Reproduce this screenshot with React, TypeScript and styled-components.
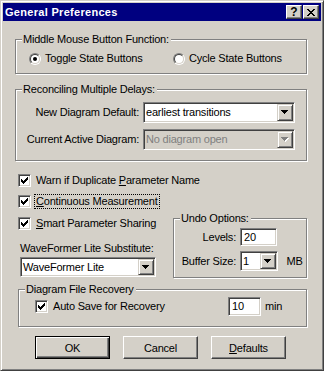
import styled, { createGlobalStyle } from "styled-components";

const face = "#d4d0c8";
const shadow = "#808080";
const darkShadow = "#404040";

const GlobalStyle = createGlobalStyle`
  html, body {
    margin: 0;
    padding: 0;
    background: ${face};
  }
  * {
    box-sizing: border-box;
  }
`;

const Window = styled.div`
  width: 324px;
  height: 371px;
  display: flex;
  flex-direction: column;
  padding: 2px;
  background: ${face};
  border: 1px solid;
  border-color: ${face} ${darkShadow} ${darkShadow} ${face};
  box-shadow: inset 1px 1px #fff, inset -1px -1px ${shadow};
  font-family: "Liberation Sans", Arial, sans-serif;
  font-size: 11px;
  letter-spacing: -0.2px;
  color: #000;
  white-space: nowrap;
`;

const TitleBar = styled.div`
  height: 18px;
  flex: none;
  display: flex;
  align-items: center;
  padding: 0 2px;
  background: #000080;
  color: #fff;
  font-weight: 700;
  letter-spacing: 0.3px;
`;

const CaptionButtons = styled.div`
  margin-left: auto;
  display: flex;
  gap: 1px;
`;

const CaptionButton = styled.span`
  width: 16px;
  height: 14px;
  display: flex;
  align-items: center;
  justify-content: center;
  background: ${face};
  color: #000;
  border: 1px solid;
  border-color: #fff ${darkShadow} ${darkShadow} #fff;
  box-shadow: inset -1px -1px ${shadow};
  font-size: 12px;
  line-height: 1;
  letter-spacing: 0;
`;

const Client = styled.div`
  flex: 1;
  display: flex;
  flex-direction: column;
  padding: 18px 14px 0 12px;
`;

const Group = styled.div<{ $mt?: number; $ml?: number; $pb: number }>`
  display: flex;
  flex-direction: column;
  margin-top: ${(p) => p.$mt ?? 0}px;
  margin-left: ${(p) => p.$ml ?? 0}px;
  padding-bottom: ${(p) => p.$pb}px;
  border: 1px solid ${shadow};
  box-shadow: inset 1px 1px #fff, 1px 1px #fff;
`;

const GroupTitle = styled.span`
  align-self: flex-start;
  margin: -7px 0 0 6px;
  padding: 0 2px 0 1px;
  line-height: 13px;
  background: ${face};
`;

const RadioRow = styled.div`
  display: grid;
  grid-template-columns: 144px auto;
  margin-top: 6px;
  padding-left: 13px;
`;

const Option = styled.label`
  display: flex;
  align-items: center;
  height: 13px;
`;

const RadioRing = styled.span`
  width: 12px;
  height: 12px;
  flex: none;
  display: flex;
  border-radius: 50%;
  border: 1px solid;
  border-color: ${shadow} #fff #fff ${shadow};
`;

const RadioWell = styled.span`
  width: 10px;
  height: 10px;
  display: flex;
  align-items: center;
  justify-content: center;
  border-radius: 50%;
  border: 1px solid;
  border-color: ${darkShadow} ${face} ${face} ${darkShadow};
  background: #fff;
`;

const RadioDot = styled.span<{ $on: boolean }>`
  width: 4px;
  height: 4px;
  border-radius: 50%;
  background: ${(p) => (p.$on ? "#000" : "transparent")};
`;

const RadioText = styled.span`
  margin-left: 4px;
  line-height: 13px;
`;

const FieldGrid = styled.div<{ $cols: string; $mt: number; $pl: number; $rowGap: number }>`
  display: grid;
  grid-template-columns: ${(p) => p.$cols};
  column-gap: 4px;
  row-gap: ${(p) => p.$rowGap}px;
  align-items: center;
  justify-items: start;
  margin-top: ${(p) => p.$mt}px;
  padding-left: ${(p) => p.$pl}px;
`;

const FieldLabel = styled.span`
  justify-self: end;
  line-height: 13px;
`;

const Sunken = styled.div<{ $w: number; $h: number; $disabled?: boolean }>`
  width: ${(p) => p.$w}px;
  height: ${(p) => p.$h}px;
  display: flex;
  align-items: center;
  padding: 1px;
  border: 1px solid;
  border-color: ${shadow} #fff #fff ${shadow};
  box-shadow: inset 1px 1px ${darkShadow}, inset -1px -1px ${face};
  background: ${(p) => (p.$disabled ? face : "#fff")};
  color: ${(p) => (p.$disabled ? shadow : "#000")};
`;

const FieldText = styled.span<{ $pl: number }>`
  flex: 1;
  padding-left: ${(p) => p.$pl}px;
  line-height: 13px;
  overflow: hidden;
`;

const DropButton = styled.span`
  width: 16px;
  align-self: stretch;
  flex: none;
  display: flex;
  align-items: center;
  justify-content: center;
  background: ${face};
  border: 1px solid;
  border-color: ${face} ${darkShadow} ${darkShadow} ${face};
  box-shadow: inset 1px 1px #fff, inset -1px -1px ${shadow};
`;

const Lower = styled.div`
  display: flex;
  flex-direction: column;
  padding-left: 3px;
`;

const Checks = styled.div`
  display: flex;
  flex-direction: column;
  gap: 6px;
  margin-top: 12px;
`;

const CheckRow = styled.label`
  display: flex;
  align-items: center;
  height: 15px;
`;

const CheckBox = styled.span`
  width: 13px;
  height: 13px;
  flex: none;
  padding: 2px;
  border: 1px solid;
  border-color: ${shadow} #fff #fff ${shadow};
  box-shadow: inset 1px 1px ${darkShadow}, inset -1px -1px ${face};
  background: #fff;
  svg {
    display: block;
  }
`;

const CheckText = styled.span<{ $focus?: boolean }>`
  margin-left: 3px;
  padding: 0 1px;
  line-height: 13px;
  border: 1px ${(p) => (p.$focus ? "dotted #000" : "solid transparent")};
`;

const Split = styled.div`
  display: grid;
  grid-template-columns: 155px 134px;
  align-items: start;
  margin-top: 7px;
`;

const LeftColumn = styled.div`
  display: flex;
  flex-direction: column;
`;

const SubLabel = styled.span`
  margin: 11px 0 0 2px;
  line-height: 13px;
`;

const ComboSlot = styled.div`
  margin: 2px 0 0 2px;
`;

const Unit = styled.span<{ $ml: number }>`
  margin-left: ${(p) => p.$ml}px;
  line-height: 13px;
`;

const RecoveryRow = styled.div`
  display: grid;
  grid-template-columns: 193px 33px auto;
  align-items: center;
  margin-top: 1px;
  padding-left: 16px;
`;

const ButtonRow = styled.div`
  display: flex;
  gap: 13px;
  margin-top: 9px;
  padding-left: 20px;
`;

const PushButton = styled.button<{ $default?: boolean }>`
  width: 75px;
  height: 23px;
  padding: 0;
  font: inherit;
  letter-spacing: inherit;
  color: #000;
  background: ${face};
  border: 1px solid;
  border-color: ${(p) =>
    p.$default ? "#000" : `#fff ${darkShadow} ${darkShadow} #fff`};
  box-shadow: ${(p) =>
    p.$default
      ? `inset 1px 1px #fff, inset -1px -1px ${darkShadow}, inset -2px -2px ${shadow}`
      : `inset -1px -1px ${shadow}`};
`;

const CheckMark = () => (
  <svg width="7" height="7" viewBox="0 0 7 7">
    <path
      d="M0 2h1v3H0z M1 3h1v3H1z M2 4h1v3H2z M3 3h1v3H3z M4 2h1v3H4z M5 1h1v3H5z M6 0h1v3H6z"
      fill="#000"
    />
  </svg>
);

const ARROW = "M0 0h7v1h-1v1h-1v1h-1v1h-1v-1h-1v-1h-1v-1h-1z";

const DownArrow = ({ disabled }: { disabled?: boolean }) => (
  <svg width="8" height="5" viewBox="0 0 8 5">
    {disabled && <path d={ARROW} fill="#fff" transform="translate(1 1)" />}
    <path d={ARROW} fill={disabled ? shadow : "#000"} />
  </svg>
);

const CloseGlyph = () => (
  <svg width="8" height="7" viewBox="0 0 8 7">
    <path
      d="M0 0h2v1H0z M6 0h2v1H6z M1 1h2v1H1z M5 1h2v1H5z M2 2h4v1H2z M3 3h2v1H3z M2 4h4v1H2z M1 5h2v1H1z M5 5h2v1H5z M0 6h2v1H0z M6 6h2v1H6z"
      fill="#000"
    />
  </svg>
);

type ComboProps = { value: string; w: number; h: number; disabled?: boolean };

const Combo = ({ value, w, h, disabled }: ComboProps) => (
  <Sunken $w={w} $h={h} $disabled={disabled}>
    <FieldText $pl={1}>{value}</FieldText>
    <DropButton>
      <DownArrow disabled={disabled} />
    </DropButton>
  </Sunken>
);

const Edit = ({ value, w, h }: { value: string; w: number; h: number }) => (
  <Sunken $w={w} $h={h}>
    <FieldText $pl={2}>{value}</FieldText>
  </Sunken>
);

const Radio = ({ on, children }: { on: boolean; children: React.ReactNode }) => (
  <Option>
    <RadioRing>
      <RadioWell>
        <RadioDot $on={on} />
      </RadioWell>
    </RadioRing>
    <RadioText>{children}</RadioText>
  </Option>
);

const Check = ({ focus, children }: { focus?: boolean; children: React.ReactNode }) => (
  <CheckRow>
    <CheckBox>
      <CheckMark />
    </CheckBox>
    <CheckText $focus={focus}>{children}</CheckText>
  </CheckRow>
);

const App = () => {
  return (
    <>
      <GlobalStyle />
      <Window>
        <TitleBar>
          General Preferences
          <CaptionButtons>
            <CaptionButton>?</CaptionButton>
            <CaptionButton>
              <CloseGlyph />
            </CaptionButton>
          </CaptionButtons>
        </TitleBar>
        <Client>
          <Group $pb={8}>
            <GroupTitle>Middle Mouse Button Function:</GroupTitle>
            <RadioRow>
              <Radio on>Toggle State Buttons</Radio>
              <Radio on={false}>Cycle State Buttons</Radio>
            </RadioRow>
          </Group>

          <Group $mt={15} $pb={10}>
            <GroupTitle>Reconciling Multiple Delays:</GroupTitle>
            <FieldGrid $cols="116px 152px" $mt={6} $pl={7} $rowGap={6}>
              <FieldLabel>New Diagram Default:</FieldLabel>
              <Combo value="earliest transitions" w={152} h={21} />
              <FieldLabel>Current Active Diagram:</FieldLabel>
              <Combo value="No diagram open" w={152} h={21} disabled />
            </FieldGrid>
          </Group>

          <Lower>
            <Checks>
              <Check>
                Warn if Duplicate <u>P</u>arameter Name
              </Check>
              <Check focus>
                <u>C</u>ontinuous Measurement
              </Check>
            </Checks>

            <Split>
              <LeftColumn>
                <Check>
                  <u>S</u>mart Parameter Sharing
                </Check>
                <SubLabel>WaveFormer Lite Substitute:</SubLabel>
                <ComboSlot>
                  <Combo value="WaveFormer Lite" w={136} h={20} />
                </ComboSlot>
              </LeftColumn>

              <Group $mt={2} $pb={6}>
                <GroupTitle>Undo Options:</GroupTitle>
                <FieldGrid $cols="62px auto auto" $mt={3} $pl={0} $rowGap={5}>
                  <FieldLabel>Levels:</FieldLabel>
                  <Edit value="20" w={37} h={18} />
                  <span />
                  <FieldLabel>Buffer Size:</FieldLabel>
                  <Combo value="1" w={38} h={20} />
                  <Unit $ml={1}>MB</Unit>
                </FieldGrid>
              </Group>
            </Split>

            <Group $mt={11} $pb={10}>
              <GroupTitle>Diagram File Recovery</GroupTitle>
              <RecoveryRow>
                <Check>Auto Save for Recovery</Check>
                <Edit value="10" w={33} h={19} />
                <Unit $ml={4}>min</Unit>
              </RecoveryRow>
            </Group>
          </Lower>

          <ButtonRow>
            <PushButton $default>OK</PushButton>
            <PushButton>Cancel</PushButton>
            <PushButton>
              <u>D</u>efaults
            </PushButton>
          </ButtonRow>
        </Client>
      </Window>
    </>
  );
};

export default App;
